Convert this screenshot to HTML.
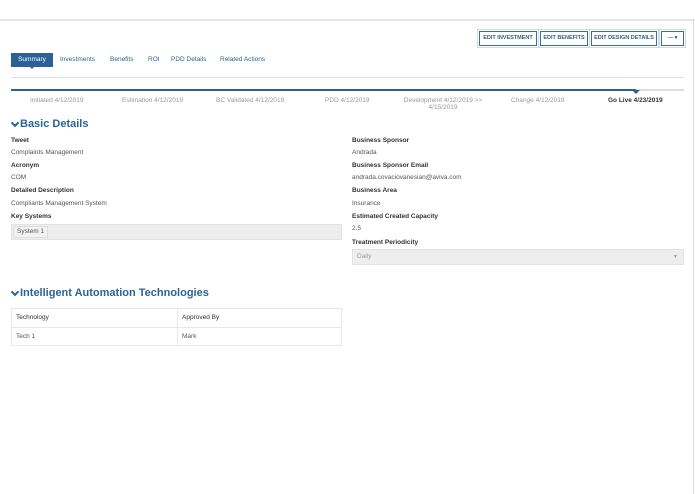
<!DOCTYPE html>
<html><head><style>
*{margin:0;padding:0;box-sizing:border-box}
body{width:695px;height:494px;background:#fff;font-family:"Liberation Sans",sans-serif;color:#555;position:relative;overflow:hidden;font-size:7px}
.a{position:absolute;white-space:nowrap}
.btn{position:absolute;top:31px;height:15px;border:1px solid #3a6d9a;color:#2f5f8a;font-size:5.5px;font-weight:bold;line-height:13px;text-align:center;white-space:nowrap;overflow:hidden;outline:1px solid #cfdbe6;outline-offset:1px}
.tab{position:absolute;top:56px;color:#2f6493;font-size:6.5px;white-space:nowrap}
.st{position:absolute;top:97px;color:#999;font-size:6.5px;text-align:center;white-space:nowrap}
.lb{position:absolute;font-weight:bold;color:#333;font-size:6.5px;white-space:nowrap}
.v{position:absolute;color:#555;font-size:6.5px;white-space:nowrap}
.h{position:absolute;color:#2a6496;font-weight:bold;font-size:11px;white-space:nowrap;padding-left:9px}
.h:before{content:"";position:absolute;left:1px;top:2px;width:4px;height:4px;border-right:2px solid #2a6496;border-bottom:2px solid #2a6496;transform:rotate(45deg)}
</style></head><body>
<div class="a" style="left:0;top:19px;width:695px;height:2px;background:#e6e6e6"></div>
<div class="a" style="left:693px;top:21px;width:1px;height:473px;background:#ddd"></div>
<div class="btn" style="left:479px;width:58px">EDIT INVESTMENT</div>
<div class="btn" style="left:540px;width:48px">EDIT BENEFITS</div>
<div class="btn" style="left:591px;width:66px">EDIT DESIGN DETAILS</div>
<div class="btn" style="left:661px;width:23px">— ▾</div>
<div class="a" style="left:11px;top:53px;width:42px;height:14px;background:#2b6196;color:#fff;font-size:6.5px;line-height:14px;text-align:center">Summary</div>
<div class="a" style="left:30px;top:67px;border:2px solid transparent;border-top-color:#2b6196"></div>
<div class="tab" style="left:60px">Investments</div>
<div class="tab" style="left:110px">Benefits</div>
<div class="tab" style="left:148px">ROI</div>
<div class="tab" style="left:171px">PDD Details</div>
<div class="tab" style="left:220px">Related Actions</div>
<div class="a" style="left:11px;top:77px;width:673px;height:1px;background:#ddd"></div>
<div class="a" style="left:11px;top:89px;width:625px;height:2px;background:#2b6196"></div>
<div class="a" style="left:636px;top:89px;width:48px;height:2px;background:#ddd"></div>
<div class="a" style="left:632px;top:90px;border:4px solid transparent;border-top-color:#2b6196;border-bottom:0"></div>
<div class="st" style="left:30px">Initiated 4/12/2019</div>
<div class="st" style="left:122px">Estimation 4/12/2019</div>
<div class="st" style="left:216px">BC Validated 4/12/2019</div>
<div class="st" style="left:325px">PDD 4/12/2019</div>
<div class="st" style="left:400px;width:86px">Development 4/12/2019 &gt;&gt;<br>4/15/2019</div>
<div class="st" style="left:511px">Change 4/12/2019</div>
<div class="st" style="left:608px;color:#333;font-weight:bold">Go Live 4/23/2019</div>
<div class="h" style="left:11px;top:118px">Basic Details</div>
<div class="lb" style="left:11px;top:137px">Tweet</div>
<div class="v" style="left:11px;top:149px">Complaints Management</div>
<div class="lb" style="left:11px;top:162px">Acronym</div>
<div class="v" style="left:11px;top:174px">COM</div>
<div class="lb" style="left:11px;top:187px">Detailed Description</div>
<div class="v" style="left:11px;top:200px">Compliants Management System</div>
<div class="lb" style="left:11px;top:213px">Key Systems</div>
<div class="a" style="left:11px;top:224px;width:331px;height:16px;background:#eee;border:1px solid #e2e2e2"></div>
<div class="a" style="left:13px;top:226px;height:12px;padding:0 3px;border:1px solid #ddd;background:#f2f2f2;font-size:6.5px;line-height:10px;color:#555">System 1</div>
<div class="lb" style="left:352px;top:137px">Business Sponsor</div>
<div class="v" style="left:352px;top:149px">Andrada</div>
<div class="lb" style="left:352px;top:162px">Business Sponsor Email</div>
<div class="v" style="left:352px;top:174px">andrada.covaciovanesian@aviva.com</div>
<div class="lb" style="left:352px;top:187px">Business Area</div>
<div class="v" style="left:352px;top:200px">Insurance</div>
<div class="lb" style="left:352px;top:213px">Estimated Created Capacity</div>
<div class="v" style="left:352px;top:225px">2.5</div>
<div class="lb" style="left:352px;top:239px">Treatment Periodicity</div>
<div class="a" style="left:352px;top:249px;width:332px;height:16px;background:#eee;border:1px solid #e2e2e2;color:#999;font-size:6.5px;line-height:14px;padding-left:4px">Daily<span style="position:absolute;right:5px;font-size:5px">▼</span></div>
<div class="h" style="left:11px;top:287px">Intelligent Automation Technologies</div>
<div class="a" style="left:11px;top:308px;width:331px;height:38px;border:1px solid #e8e8e8"></div>
<div class="a" style="left:11px;top:327px;width:331px;height:1px;background:#e8e8e8"></div>
<div class="a" style="left:177px;top:308px;width:1px;height:38px;background:#e8e8e8"></div>
<div class="v" style="left:16px;top:314px;color:#333">Technology</div>
<div class="v" style="left:182px;top:314px;color:#333">Approved By</div>
<div class="v" style="left:16px;top:333px">Tech 1</div>
<div class="v" style="left:182px;top:333px">Mark</div>
</body></html>
